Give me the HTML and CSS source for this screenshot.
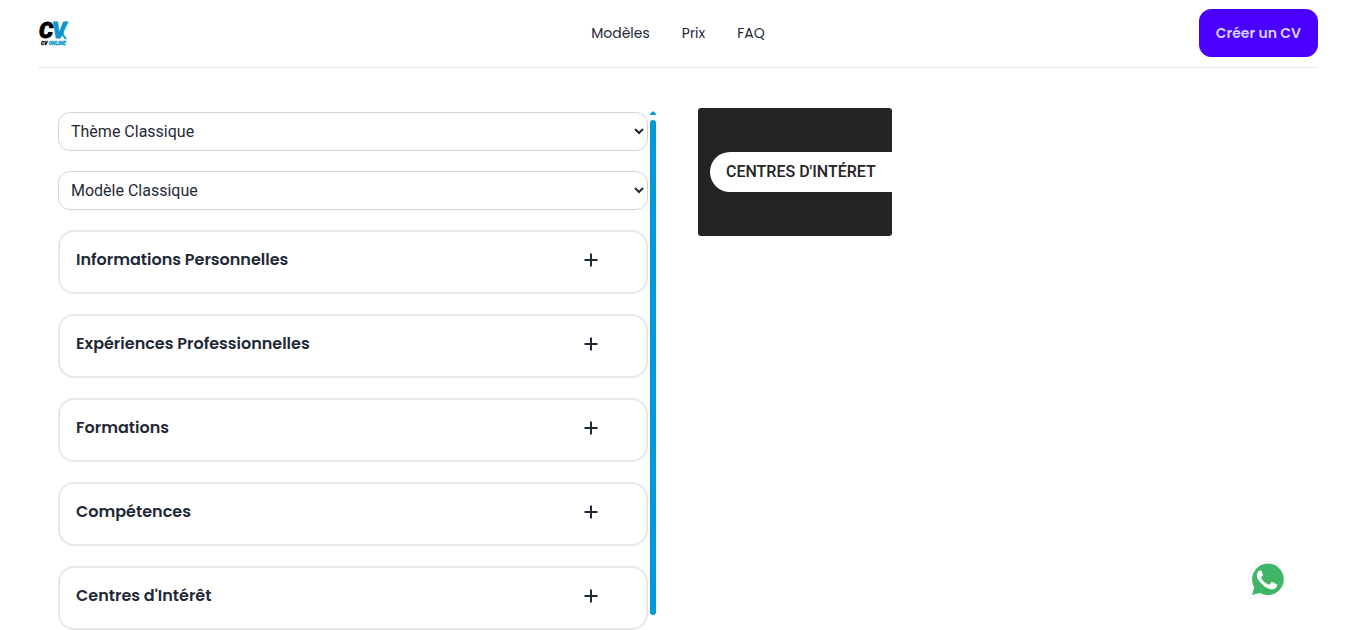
FILE: index.html
```html
<!DOCTYPE html>
<html lang="fr">
<head>
<meta charset="utf-8">
<meta name="viewport" content="width=device-width, initial-scale=1">
<title>CV Online</title>
<link rel="stylesheet" href="styles.css">
</head>
<body>
<header class="header">
  <a class="logo" href="#" aria-label="CV Online">
    <svg viewBox="0 0 32 32" width="32" height="32">
      <text class="logo-letter" x="1" y="21">C</text>
      <text class="logo-letter logo-blue" x="14" y="21">V</text>
      <path d="M21 18l3-5 1 5 3 4" fill="none" stroke="#0d96cc" stroke-width="2"/>
      <text class="logo-name" x="3" y="28">CV <tspan class="logo-blue">ONLINE</tspan></text>
    </svg>
  </a>
  <nav class="nav">
    <a href="#">Modèles</a>
    <a href="#">Prix</a>
    <a href="#">FAQ</a>
  </nav>
  <div class="actions"><button class="create" type="button">Créer un CV</button></div>
</header>

<main class="editor">
  <section class="panel">
    <form class="form">
      <select class="select" aria-label="Thème"><option>Thème Classique</option></select>
      <select class="select" aria-label="Modèle"><option>Modèle Classique</option></select>
      <button class="section" type="button"><span>Informations Personnelles</span><svg class="plus" viewBox="0 0 14 14"><path d="M7 0.500v13M0.500 7h13"/></svg></button>
      <button class="section" type="button"><span>Expériences Professionnelles</span><svg class="plus" viewBox="0 0 14 14"><path d="M7 0.500v13M0.500 7h13"/></svg></button>
      <button class="section" type="button"><span>Formations</span><svg class="plus" viewBox="0 0 14 14"><path d="M7 0.500v13M0.500 7h13"/></svg></button>
      <button class="section" type="button"><span>Compétences</span><svg class="plus" viewBox="0 0 14 14"><path d="M7 0.500v13M0.500 7h13"/></svg></button>
      <button class="section" type="button"><span>Centres d'Intérêt</span><svg class="plus" viewBox="0 0 14 14"><path d="M7 0.500v13M0.500 7h13"/></svg></button>
    </form>
    <div class="scrollbar" aria-hidden="true">
      <svg class="scroll-arrow" viewBox="0 0 6 4"><path d="M0 4Q0 3 1 2L3 0l2 2q1 1 1 2z"/></svg>
      <div class="thumb"></div>
    </div>
  </section>
  <section class="preview">
    <div class="sheet"><h2 class="sheet-title">CENTRES D'INTÉRET</h2></div>
  </section>
</main>

<a class="whatsapp" href="#" aria-label="WhatsApp">
  <svg viewBox="0 0 40 40" width="40" height="40">
    <path d="M1.500 38.500l2.600-9.600A18 18 0 1 1 11.500 35.500z" fill="#fff" stroke="#eff0f1" stroke-width="1"/>
    <path d="M5 35l2.200-7.800A15.800 15.800 0 1 1 12.800 32.900z" fill="#3fb566"/>
    <path d="M14.800 11.500c-.4-.9-.8-.9-1.300-.9-1 0-1.800.4-2.400 1.200-1 1.200-1.300 2.300-1.300 3.600 0 2.500 1.800 4.900 3.400 6.900 2.400 3 5.300 5.300 9 6.500 2.600.9 5 .7 6.800-1 1-1 1.300-2.300 1.200-3.200-.1-.5-4.400-2.600-5-2.700-.5-.1-.8.100-1.100.5l-1.600 2c-.4.4-.7.400-1.200.2-3.300-1.500-5.400-3.400-7-6.300-.2-.5-.1-.8.200-1.200.7-.8 1.600-1.600 1.300-2.400z" fill="#fff"/>
  </svg>
</a>
</body>
</html>
```
FILE: styles.css
```css
* {
  box-sizing: border-box;
}

body {
  margin: 0;
  background: #fff;
  color: #1f2937;
  font-family: Poppins, Inter, sans-serif;
}

.header {
  display: grid;
  grid-template-columns: 1fr auto 1fr;
  align-items: center;
  max-width: 1280px;
  height: 68px;
  margin: 0 auto;
  padding-bottom: 2px;
  border-bottom: 1px solid #e5e7eb;
}

.logo {
  display: flex;
  justify-self: start;
}

.logo-letter {
  font: italic 900 22px Roboto, sans-serif;
  stroke: #000;
  stroke-width: 1px;
}

.logo-name {
  font: italic 900 5px Roboto, sans-serif;
  stroke: #000;
  stroke-width: 0.3px;
}

.logo-blue {
  fill: #0d96cc;
  stroke: #0d96cc;
}

.nav {
  display: flex;
  gap: 32px;
  font-size: 14px;
  line-height: 20px;
}

.nav a {
  color: #1f2937;
  text-decoration: none;
}

.actions {
  display: flex;
  justify-content: flex-end;
}

.create {
  height: 48px;
  padding: 0 16px;
  border: 1px solid #4a00ff;
  border-radius: 12px;
  background: #4a00ff;
  color: #d6cfff;
  font: 600 14px/20px Poppins, Inter, sans-serif;
}

.editor {
  display: grid;
  grid-template-columns: 1fr 1fr;
  max-width: 1280px;
  margin: 0 auto;
  padding-top: 40px;
}

.panel {
  display: flex;
  gap: 2px;
  padding: 0 22px 0 20px;
}

.form {
  display: flex;
  flex: 1;
  flex-direction: column;
  gap: 20px;
  padding-top: 4px;
}

.select {
  width: 100%;
  height: 39px;
  padding: 0 0 0 8px;
  border: 1px solid #d1d5db;
  border-radius: 12px;
  background: #fff;
  color: #1f2937;
  font: 400 16px/24px Roboto, sans-serif;
}

.section {
  display: flex;
  justify-content: space-between;
  height: 64px;
  padding: 16px 48px 0 16px;
  border: 2px solid #e5e7eb;
  border-radius: 16px;
  background: #fff;
  color: #1f2937;
  font: 600 16px/24px Poppins, Inter, sans-serif;
}

.plus {
  width: 14px;
  height: 24px;
  fill: none;
  stroke: #1f2937;
  stroke-width: 2;
}

.scrollbar {
  display: flex;
  flex-direction: column;
  gap: 5px;
  width: 6px;
  padding: 3px 0 15px;
}

.scroll-arrow {
  width: 6px;
  height: 4px;
  fill: #0398d8;
}

.thumb {
  flex: 1;
  border-radius: 3px;
  background: #0398d8;
}

.preview {
  padding: 0 20px;
}

.sheet {
  width: fit-content;
  padding: 44px 0 44px 12px;
  border-radius: 3px;
  background: #242424;
}

.sheet-title {
  margin: 0;
  padding: 8px 16px;
  border-radius: 20px 0 0 20px;
  background: #fff;
  color: #242424;
  font: 500 16px/24px Roboto, sans-serif;
}

.whatsapp {
  position: fixed;
  right: 69px;
  bottom: 30px;
  display: flex;
}
```
